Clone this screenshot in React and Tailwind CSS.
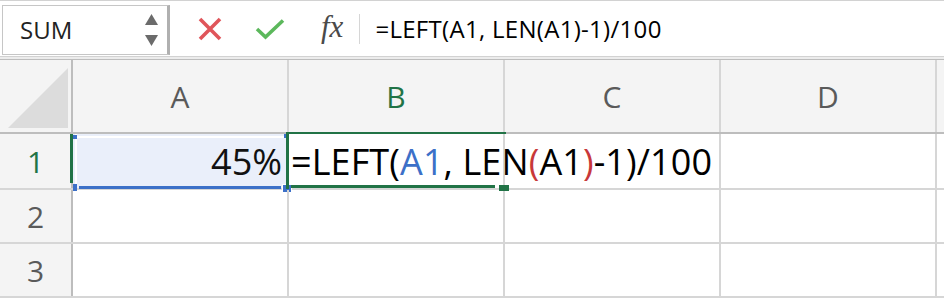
import React from "react";

const cols = ["A", "B", "C", "D"];

// grid cell with right/bottom grid line
const Cell = ({ children, className = "" }) => (
  <div className={`relative w-[216px] shrink-0 border-r-2 border-[#d6d6d6] ${className}`}>{children}</div>
);

export default function App() {
  return (
    <div className="w-[944px] h-[304px] overflow-hidden bg-white" style={{ fontFamily: "'Open Sans', 'Noto Sans', sans-serif" }}>
      {/* Formula bar */}
      <div className="flex h-[57px] border-t border-b border-[#d2d2d2] bg-white">
        <div className="ml-[2px] mt-[4px] h-[50px] w-[168px] flex items-center justify-between border border-r-[3px] border-[#c6c6c6] border-r-[#b0b0b0] pl-[17px] pr-[9px]">
          <span className="text-[24px] text-[#222]">SUM</span>
          <div className="flex flex-col gap-[10px]">
            <svg width="13" height="11" viewBox="0 0 13 11"><path d="M6.5 0 L13 11 L0 11 Z" fill="#6b6b6b" /></svg>
            <svg width="13" height="11" viewBox="0 0 13 11"><path d="M0 0 L13 0 L6.5 11 Z" fill="#6b6b6b" /></svg>
          </div>
        </div>
        <div className="flex items-center pl-[28px]">
          <svg width="24" height="24" viewBox="0 0 24 24">
            <path d="M2 2 L22 22 M22 2 L2 22" stroke="#e0555a" strokeWidth="3.6" />
          </svg>
          <svg className="ml-[33px]" width="30" height="22" viewBox="0 0 30 22">
            <path d="M2 11 L10.5 19 L28 2.5" stroke="#5cb85c" strokeWidth="3.6" fill="none" />
          </svg>
          <span className="ml-[36px] mb-[3px] text-[31px] italic text-[#4a4a4a]" style={{ fontFamily: "'Liberation Serif', 'DejaVu Serif', serif" }}>fx</span>
          <div className="ml-[16px] h-[30px] w-px bg-[#d6d6d6]" />
          <span className="ml-[15px] text-[24px] font-medium tracking-[0.3px] text-black">=LEFT(A1, LEN(A1)-1)/100</span>
        </div>
      </div>
      <div className="h-[3px] border-b border-[#bdbdbd] bg-[#ececec]" />

      {/* Column headers */}
      <div className="flex h-[74px] border-b-2 border-[#bdbdbd] bg-[#f4f4f4]">
        <div className="relative w-[73px] shrink-0 border-r-2 border-[#bdbdbd]">
          <svg className="absolute left-[8px] top-[8px]" width="60" height="60" viewBox="0 0 60 60">
            <path d="M60 0 L60 60 L0 60 Z" fill="#dcdcdc" />
          </svg>
        </div>
        {cols.map((c) => (
          <Cell key={c} className={`flex items-center justify-center text-[30px] ${c === "B" ? "text-[#217346] font-medium" : "text-[#5a5a5a]"}`}>
            {c}
            {c === "B" && <div className="absolute -left-[3px] -bottom-[2px] h-[2px] w-[220px] bg-[#217346]" />}
          </Cell>
        ))}
        <div className="flex-1" />
      </div>

      {/* Row 1 */}
      <div className="flex h-[56px] border-b-2 border-[#d6d6d6]">
        <div className="relative flex w-[73px] shrink-0 items-center justify-center border-r-2 border-[#bdbdbd] bg-[#f4f4f4] text-[30px] font-medium text-[#217346]">
          1
          <div className="absolute -right-[2px] top-0 h-[49px] w-[3px] bg-[#217346]" />
        </div>
        <Cell className="z-0 bg-[#eaeffa]">
          <div className="absolute inset-x-[2px] top-[2px] h-[2px] bg-white" />
          <div className="absolute left-[2px] top-0 h-full w-[2px] bg-white" />
          <div className="absolute left-0 top-[1px] h-[4px] w-[4px] bg-[#3c70c8]" />
          <div className="absolute right-[-1px] top-0 h-[4px] w-[4px] bg-[#3c70c8]" />
          <div className="absolute left-[6px] right-[6px] bottom-[-1px] h-[3px] bg-[#3c70c8]" />
          <div className="absolute left-0 bottom-[-3px] h-[7px] w-[4px] bg-[#3c70c8]" />
          <div className="absolute right-[-4px] bottom-[-4px] h-[7px] w-[8px] bg-[#3c70c8] ring-1 ring-white" />
          <div className="flex h-full items-center justify-end pr-[5px] pt-[2px] text-[36px] font-medium text-[#111]">45%</div>
        </Cell>
        <Cell className="z-10">
          <div className="absolute -left-[3px] top-0 h-[55px] w-[3px] bg-[#217346]" />
          <div className="absolute left-[2px] right-[8px] bottom-[0px] h-[3px] bg-[#217346]" />
          <div className="absolute right-[-6px] bottom-[-3px] h-[6px] w-[10px] bg-[#217346]" />
          <div className="flex h-full items-center pl-[2px] pt-[2px] whitespace-nowrap text-[36px] font-medium tracking-[0.1px] text-black">
            =LEFT(<span className="text-[#3c70c8]">A1</span>, LEN<span className="text-[#c8383a]">(</span>A1<span className="text-[#c8383a]">)</span>-1)/100
          </div>
        </Cell>
        <Cell />
        <Cell />
        <div className="flex-1" />
      </div>

      {/* Rows 2-3 */}
      {["2", "3"].map((r) => (
        <div key={r} className="flex h-[54px] border-b-2 border-[#d6d6d6]">
          <div className="flex w-[73px] shrink-0 items-center justify-center border-r-2 border-[#bdbdbd] bg-[#f4f4f4] text-[30px] text-[#5a5a5a]">{r}</div>
          {cols.map((c) => (
            <Cell key={c} />
          ))}
          <div className="flex-1" />
        </div>
      ))}
    </div>
  );
}
